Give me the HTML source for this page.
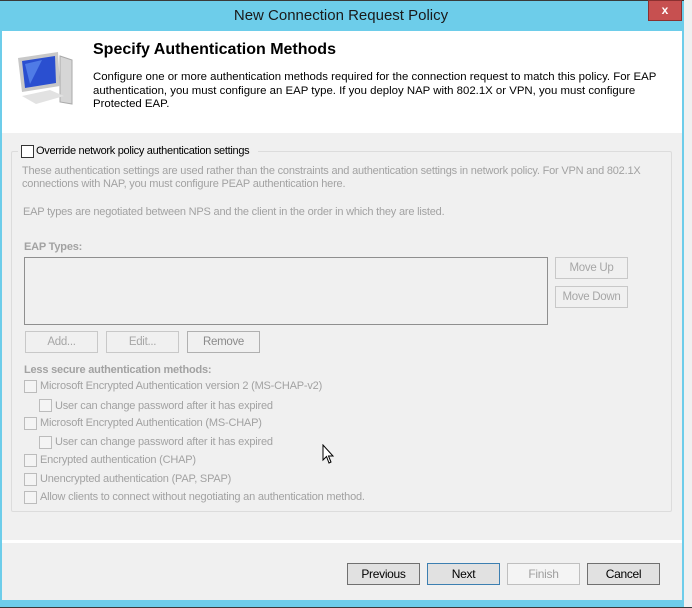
<!DOCTYPE html>
<html><head><style>
*{margin:0;padding:0;box-sizing:border-box}
body{width:692px;height:608px;overflow:hidden;background:#6dcdea;font-family:"Liberation Sans",sans-serif;position:relative}
.a{position:absolute;white-space:nowrap}
.g{color:#a2a2a2;font-size:11px;letter-spacing:-0.2px}
.cb{position:absolute;width:13px;height:13px;border:1px solid #bcbcbc;background:#f4f4f4}
.btn{position:absolute;border:1px solid #c8c8c8;background:#f0f0f0;color:#a6a6a6;font-size:11.5px;text-align:center;letter-spacing:-0.3px}
.bb{position:absolute;top:563px;width:73px;height:22px;border:1px solid #707070;background:#e1e1e1;font-size:12px;text-align:center;line-height:20px;letter-spacing:-0.3px;color:#000}
</style></head><body>
<div class="a" style="left:0;top:0;width:692px;height:1px;background:#3a3a3a"></div>
<div class="a" style="left:0;top:7px;width:682px;text-align:center;font-size:15px;color:#1a1a1a">New Connection Request Policy</div>
<div class="a" style="left:648px;top:0;width:34px;height:21px;background:#c75050;border:1px solid #8a3030;color:#fff;font-size:12px;font-weight:bold;text-align:center;line-height:19px">x</div>
<div class="a" style="left:684px;top:0;width:8px;height:608px;background:#f0f0f0"></div>
<div class="a" style="left:2px;top:31px;width:680px;height:569px;background:#f0f0f0"></div>
<div class="a" style="left:2px;top:31px;width:680px;height:102px;background:#fff"></div>
<svg class="a" style="left:14px;top:46px" width="64" height="64" viewBox="0 0 64 64">
<path d="M46 10 L58 14 L58 58 L46 56 Z" fill="#d6d6d6" stroke="#aaa"/>
<path d="M4 12 L44 6 L46 40 L8 46 Z" fill="#c8c8c8"/>
<path d="M8 15 L41 10 L42 37 L11 42 Z" fill="#2a4fd0"/>
<path d="M11 18 L28 14 L16 38 Z" fill="#5f8ef0" opacity=".7"/>
<path d="M8 50 L36 44 L50 50 L22 58 Z" fill="#e2e2e2"/>
</svg>
<div class="a" style="left:93px;top:41px;font-size:16px;font-weight:bold;color:#000">Specify Authentication Methods</div>
<div class="a" style="left:93px;top:71px;font-size:11.4px;line-height:13.5px;color:#000;white-space:normal;width:572px">Configure one or more authentication methods required for the connection request to match this policy. For EAP authentication, you must configure an EAP type. If you deploy NAP with 802.1X or VPN, you must configure Protected EAP.</div>
<div class="a" style="left:11px;top:151px;width:661px;height:361px;border:1px solid #dcdcdc;border-radius:2px"></div>
<div class="a" style="left:18px;top:144px;width:240px;height:14px;background:#f0f0f0"></div>
<div class="cb" style="left:21px;top:145px;border-color:#333;background:#fff"></div>
<div class="a" style="left:36px;top:145px;font-size:11px;letter-spacing:-0.3px;color:#000">Override network policy authentication settings</div>
<div class="a g" style="left:22px;top:165px;line-height:13px">These authentication settings are used rather than the constraints and authentication settings in network policy. For VPN and 802.1X<br>connections with NAP, you must configure PEAP authentication here.</div>
<div class="a g" style="left:23px;top:206px">EAP types are negotiated between NPS and the client in the order in which they are listed.</div>
<div class="a g" style="left:24px;top:241px;font-weight:bold">EAP Types:</div>
<div class="a" style="left:24px;top:257px;width:524px;height:68px;border:1px solid #8f8f8f"></div>
<div class="btn" style="left:555px;top:257px;width:73px;height:22px;line-height:20px">Move Up</div>
<div class="btn" style="left:555px;top:286px;width:73px;height:22px;line-height:20px">Move Down</div>
<div class="btn" style="left:25px;top:331px;width:73px;height:22px;line-height:20px">Add...</div>
<div class="btn" style="left:106px;top:331px;width:73px;height:22px;line-height:20px">Edit...</div>
<div class="btn" style="left:187px;top:331px;width:73px;height:22px;line-height:20px;border-color:#b0b0b0;color:#8a8a8a">Remove</div>
<div class="a g" style="left:24px;top:364px;font-weight:bold">Less secure authentication methods:</div>
<div class="cb" style="left:24px;top:380px"></div><div class="a g" style="left:40px;top:380px">Microsoft Encrypted Authentication version 2 (MS-CHAP-v2)</div>
<div class="cb" style="left:39px;top:399px"></div><div class="a g" style="left:55px;top:400px">User can change password after it has expired</div>
<div class="cb" style="left:24px;top:417px"></div><div class="a g" style="left:40px;top:417px">Microsoft Encrypted Authentication (MS-CHAP)</div>
<div class="cb" style="left:39px;top:436px"></div><div class="a g" style="left:55px;top:436px">User can change password after it has expired</div>
<div class="cb" style="left:24px;top:454px"></div><div class="a g" style="left:40px;top:454px">Encrypted authentication (CHAP)</div>
<div class="cb" style="left:24px;top:473px"></div><div class="a g" style="left:40px;top:473px">Unencrypted authentication (PAP, SPAP)</div>
<div class="cb" style="left:24px;top:491px"></div><div class="a g" style="left:40px;top:491px">Allow clients to connect without negotiating an authentication method.</div>
<svg class="a" style="left:322px;top:444px" width="14" height="22" viewBox="0 0 14 22"><path d="M1 1 L1 16 L4.5 12.5 L7 19 L9 18 L6.5 12 L11 12 Z" fill="#fff" stroke="#000"/></svg>
<div class="a" style="left:2px;top:540px;width:680px;height:3px;background:#fff"></div>
<div class="bb" style="left:347px">Previous</div>
<div class="bb" style="left:427px;border-color:#3c7fb1">Next</div>
<div class="bb" style="left:507px;border-color:#bfbfbf;background:#f4f4f4;color:#a0a0a0">Finish</div>
<div class="bb" style="left:587px">Cancel</div>
<div class="a" style="left:0;top:607px;width:692px;height:1px;background:#3a3a3a"></div>
</body></html>
